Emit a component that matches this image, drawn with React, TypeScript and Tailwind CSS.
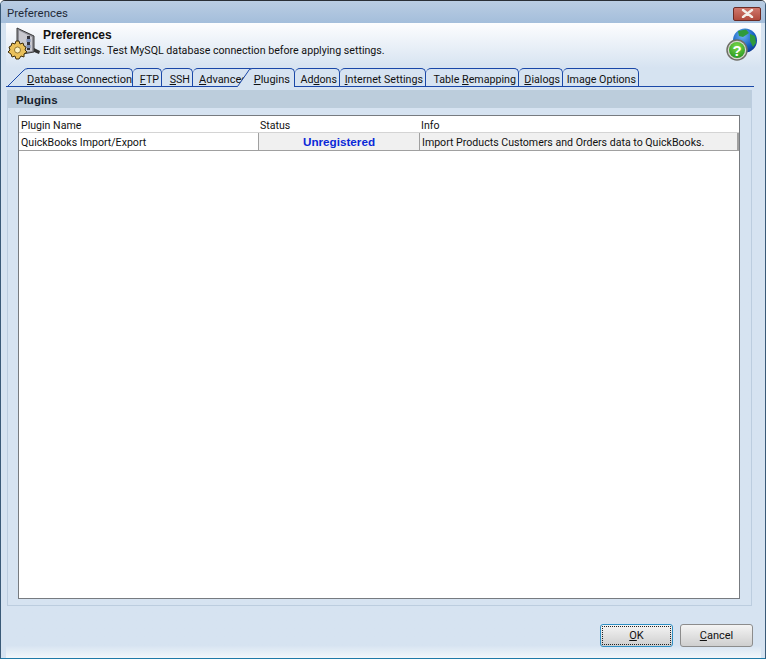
const FONT = "font-['Roboto','Liberation_Sans',Arial,sans-serif]";
const BOLD = "font-['Liberation_Sans',Arial,sans-serif] font-bold";

type TabInfo = { pre: string; key: string; post: string; width: string };

const TABS: TabInfo[] = [
  { pre: "", key: "F", post: "TP", width: "w-[29px]" },
  { pre: "", key: "S", post: "SH", width: "w-[31px]" },
];

const TABS_AFTER: TabInfo[] = [
  { pre: "Ad", key: "d", post: "ons", width: "w-[45px]" },
  { pre: "", key: "I", post: "nternet Settings", width: "w-[86px]" },
  { pre: "Table ", key: "R", post: "emapping", width: "w-[93px]" },
  { pre: "", key: "D", post: "ialogs", width: "w-[44px]" },
  { pre: "Image Options", key: "", post: "", width: "w-[76px]" },
];

function Tab({ tab }: { tab: TabInfo }) {
  return (
    <div
      className={`${tab.width} h-[18px] shrink-0 border-t border-r border-[#1a48a8] rounded-tr-[5px] rounded-tl-[5px] text-right text-[10.7px] pr-[2px] leading-[21px] whitespace-nowrap overflow-hidden`}
    >
      {tab.pre}
      {tab.key && <u>{tab.key}</u>}
      {tab.post}
    </div>
  );
}

function GearIcon() {
  return (
    <svg width="34" height="34" viewBox="0 0 34 34">
      <path d="M10 1 L27 9 L27 25 L10 28 Z" fill="#8e8e96" stroke="#3a3a3a" strokeWidth="1" />
      <path d="M12 3.5 L25 10 L25 24 L12 26 Z" fill="#c9c9cf" />
      <rect x="20" y="9" width="3" height="14" fill="#33333b" />
      <rect x="19.5" y="12" width="4" height="3" fill="#7c8fb8" />
      <rect x="19.5" y="18" width="4" height="3" fill="#7c8fb8" />
      <path d="M27 21 L33 24 L32 27 L27 25 Z" fill="#333" />
      <path
        d="M9 14 L12 14 L13 17 L16 16 L17 19 L19 20 L18 23 L20 25 L17 27 L17 30 L14 29 L12 32 L9 32 L8 29 L5 30 L4 27 L1 25 L3 23 L2 20 L4 19 L5 16 L8 17 Z"
        fill="#e9c05a"
        stroke="#3f2f0c"
        strokeWidth="1"
      />
      <circle cx="10.5" cy="23" r="3" fill="#fdf3c4" stroke="#7a5d1c" strokeWidth="0.8" />
    </svg>
  );
}

function HelpGlobe() {
  return (
    <svg width="34" height="34" viewBox="0 0 34 34">
      <defs>
        <radialGradient id="globe" cx="0.4" cy="0.3" r="0.8">
          <stop offset="0" stopColor="#6fb4f2" />
          <stop offset="0.6" stopColor="#1560c4" />
          <stop offset="1" stopColor="#0b2f86" />
        </radialGradient>
        <radialGradient id="ball" cx="0.5" cy="0.3" r="0.8">
          <stop offset="0" stopColor="#7fdc4c" />
          <stop offset="1" stopColor="#1f8f1c" />
        </radialGradient>
      </defs>
      <circle cx="20" cy="12.5" r="12" fill="url(#globe)" />
      <path d="M13 3 L21 1.5 L24 5 L18 9 L14 8 Z" fill="#2f9a3c" />
      <path d="M25 6 L30 8 L31 15 L28 19 L25 13 Z" fill="#2f9a3c" />
      <circle cx="12" cy="22" r="10" fill="#d8d8d0" stroke="#6f6f68" strokeWidth="1.5" />
      <circle cx="12" cy="22" r="8" fill="url(#ball)" />
      <text x="12" y="27.5" textAnchor="middle" fontSize="15" fontWeight="700" fill="#fff" fontFamily="Liberation Sans">
        ?
      </text>
    </svg>
  );
}

export default function App() {
  return (
    <div className={`${FONT} w-[766px] h-[659px] flex flex-col overflow-hidden text-[11px] text-[#111] bg-[#d6e3f1] border border-t-[#2a2f36] border-x-[#3a5a78] border-b-[#1f7aa8] rounded-t-[5px]`}>
      {/* title bar */}
      <div className="h-[22px] shrink-0 flex items-center justify-between pl-[6px] pr-[4px] bg-gradient-to-b from-[#bacde3] to-[#a4bedb] text-[#1f2a38]">
        <span className="leading-none pt-[4px] text-[11.4px]">Preferences</span>
        <div className="w-[28px] h-[14px] mt-[3px] flex items-center justify-center rounded-[2px] border border-[#6b2b25] bg-gradient-to-b from-[#d0776c] to-[#b04a3c]">
          <svg width="13" height="9" viewBox="0 0 13 9">
            <path d="M2 1 L11 8 M11 1 L2 8" stroke="#f4efe9" strokeWidth="2.4" strokeLinecap="round" />
          </svg>
        </div>
      </div>

      <div className="flex-1 flex flex-col border-l-[5px] border-r-[4px] border-[#d6e3f1] min-h-0 bg-gradient-to-b from-[#d6e3f1] from-[98%] to-[#f2f7fb]">
        {/* header */}
        <div className="h-[45px] shrink-0 flex items-start pl-[1px] pr-[1px] pt-[4px] bg-gradient-to-b from-[#fdfdfe] to-[#d6e3f1]">
          <GearIcon />
          <div className="ml-[2px] flex-1">
            <div className={`${BOLD} text-[12px] leading-[15px] mt-[1px]`}>Preferences</div>
            <div className="leading-[15px] text-[10.65px]">Edit settings. Test MySQL database connection before applying settings.</div>
          </div>
          <div className="mt-[1px] mr-[1px]">
            <HelpGlobe />
          </div>
        </div>

        {/* tabs */}
        <div className="relative h-[19px] shrink-0 flex pl-[21px] mr-[7px] border-b border-[#1a48a8]">
          <svg className="absolute left-[1px] top-0" width="22" height="19" viewBox="0 0 22 19">
            <path d="M0.5 18.5 L16 3 Q18 0.5 21 0.5 L22 0.5" fill="none" stroke="#1a48a8" />
          </svg>
          <div className="w-[106px] h-[18px] shrink-0 border-t border-r border-[#1a48a8] rounded-tr-[5px] leading-[21px] whitespace-nowrap text-right pr-[2px]">
            <u>D</u>atabase Connection
          </div>
          {TABS.map((tab) => (
            <Tab key={tab.key} tab={tab} />
          ))}
          <div className="relative w-[57px] h-[18px] shrink-0 border-t border-[#1a48a8] rounded-tl-[5px] leading-[21px] whitespace-nowrap pl-[6px] overflow-hidden">
            <u>A</u>dvanced
          </div>
          <div className="relative w-[45px] h-[19px] shrink-0 bg-[#d6e3f1] border-t border-r border-[#1a48a8] rounded-tr-[5px] leading-[21px] text-right pr-[4px]">
            <svg className="absolute left-[-13px] top-[-1px]" width="15" height="19" viewBox="0 0 15 19">
              <path d="M0.5 18.5 L10 5 Q12 0.5 15 0.5 L15 19 L0.5 19 Z" fill="#d6e3f1" stroke="none" />
              <path d="M0.5 18.5 L10 5 Q12 0.5 15 0.5" fill="none" stroke="#1a48a8" />
            </svg>
            <u>P</u>lugins
          </div>
          {TABS_AFTER.map((tab) => (
            <Tab key={tab.pre + tab.key} tab={tab} />
          ))}
        </div>

        {/* panel */}
        <div className="h-[516px] shrink-0 ml-[1px] mr-[9px] mt-[3px] flex flex-col border-b border-x border-[#bccddf]">
          <div className={`${BOLD} h-[18px] shrink-0 pl-[8px] text-[11.5px] leading-[20px] bg-[#bccddc] text-[#17222e]`}>Plugins</div>
          <div className="flex-1 flex flex-col min-h-0 mt-[7px] ml-[10px] mr-[11px] mb-[6px] border border-[#777b80] bg-white">
            <div className="grid grid-cols-[239px_161px_1fr] h-[35px] shrink-0 text-[10.6px] leading-[20px] border-b border-[#a0a0a0]">
              <div className="h-[17px] pl-[2px] bg-white border-b border-[#d4d4d4]">Plugin Name</div>
              <div className="h-[17px] pl-[2px] bg-white border-b border-[#d4d4d4]">Status</div>
              <div className="h-[17px] pl-[2px] bg-white border-b border-[#d4d4d4]">Info</div>
              <div className="h-[17px] pl-[2px] bg-white">QuickBooks Import/Export</div>
              <div className={`${BOLD} h-[17px] text-center text-[11.7px] leading-[18px] text-[#0a28d8] bg-[#f0f0f0] border-l border-[#a0a0a0]`}>Unregistered</div>
              <div className="h-[17px] pl-[2px] bg-[#f0f0f0] border-l border-[#a0a0a0] border-r-2 border-r-[#a0a0a0] whitespace-nowrap">Import Products Customers and Orders data to QuickBooks.</div>
            </div>
          </div>
        </div>

        {/* buttons */}
        <div className="flex-1 flex justify-end items-start gap-[7px] pt-[18px] pr-[8px]">
          <button className="w-[73px] h-[23px] rounded-[3px] border border-[#2f8fc4] bg-gradient-to-b from-[#f4f4f4] to-[#cfcfcf] leading-none outline-1 outline-dotted outline-[#222] -outline-offset-3">
            <u>O</u>K
          </button>
          <button className="w-[73px] h-[23px] rounded-[3px] border border-[#8c8c8c] bg-gradient-to-b from-[#f4f4f4] to-[#cfcfcf] leading-none">
            <u>C</u>ancel
          </button>
        </div>
      </div>
    </div>
  );
}
